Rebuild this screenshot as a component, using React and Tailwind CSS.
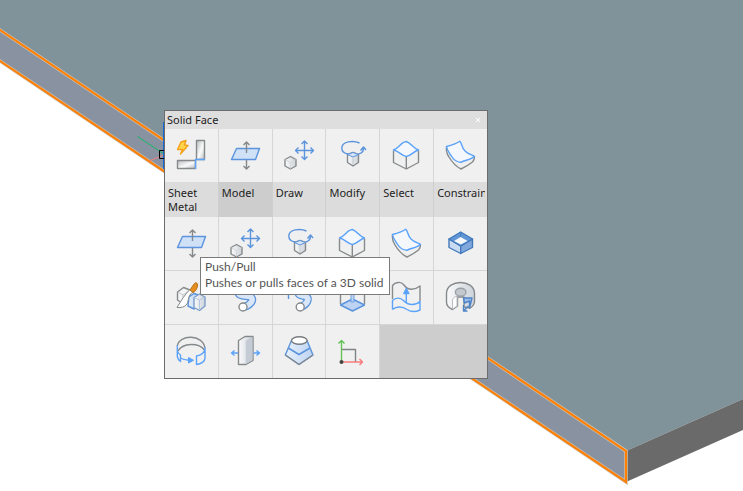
import { useState } from 'react';

const BLUE = '#5b94dd';
const SKY = '#5aa2fa';
const GRAY = '#868a8c';

function Icon({ children }) {
  return (
    <svg viewBox="0 0 32 32" className="h-8 w-8 shrink-0" fill="none" strokeWidth="1.4" strokeLinejoin="round" aria-hidden="true">
      <defs>
        <linearGradient id="steel" x1="0" y1="0" x2="1" y2="1">
          <stop offset="0" stopColor="#b9bcbe" />
          <stop offset="0.55" stopColor="#fbfbfb" />
          <stop offset="1" stopColor="#b9bcbf" />
        </linearGradient>
        <linearGradient id="glass" x1="0" y1="0" x2="1" y2="0">
          <stop offset="0" stopColor="#e8f1fb" />
          <stop offset="1" stopColor="#bdd3f2" />
        </linearGradient>
        <linearGradient id="slab" x1="0" y1="0" x2="1" y2="0">
          <stop offset="0" stopColor="#fafafa" />
          <stop offset="1" stopColor="#cdd3db" />
        </linearGradient>
      </defs>
      {children}
    </svg>
  );
}

function FlangeIcon() {
  return (
    <Icon>
      <rect x="2.5" y="21.5" width="18" height="8" fill="url(#steel)" stroke={GRAY} />
      <rect x="21.5" y="1.5" width="8" height="19" fill="url(#steel)" stroke={GRAY} />
      <path d="M20.5 30V20.5H30" stroke={SKY} />
      <path d="M6 3L11 1.5L9.5 6L13 6.5L5.5 15L7.5 10.5L2.5 10.5Z" fill="#ffd54a" stroke="#f5a01c" />
    </Icon>
  );
}

function PushPullIcon() {
  return (
    <Icon>
      <path d="M7.5 9.5H30.5L26.5 20.5H2.5Z" fill="#cfe1f7" stroke={BLUE} />
      <path d="M17.5 14V3M14.5 6L17.5 3L20.5 6M17.5 21V30M14.5 27L17.5 30L20.5 27" stroke="#85898b" />
    </Icon>
  );
}

function MoveIcon() {
  return (
    <Icon>
      <path d="M2 20.5L7.5 17.5L13 20.5V27L7.5 30L2 27Z" fill="url(#slab)" stroke={GRAY} />
      <path d="M2.5 20.8L7.5 23.5L12.5 20.8M7.5 23.5V29.5" stroke="#d3d7da" strokeWidth="1" />
      <path d="M21.5 2V20.5M12.5 11.5H30.5M18.5 5L21.5 2L24.5 5M18.5 17.5L21.5 20.5L24.5 17.5M15.5 8.5L12.5 11.5L15.5 14.5M27.5 8.5L30.5 11.5L27.5 14.5" stroke={BLUE} />
    </Icon>
  );
}

function RevolveIcon() {
  return (
    <Icon>
      <path d="M11.5 15.5L17 13.5L22.5 15.5V23.5L17 27L11.5 23.5Z" fill="url(#slab)" stroke={GRAY} />
      <path d="M11.5 15.5L17 18L22.5 15.5L17 13.5Z" fill="#d7e5f7" stroke={BLUE} strokeWidth="1" />
      <path d="M17 18V26" stroke="#c3c9cf" strokeWidth="1" />
      <path d="M23.5 4C17 1 6 2.5 5.8 9C5.8 13 9 14.5 12 15M22.5 15C26 14.3 27.5 12.5 27.5 9M24.5 11.5L27.5 8L30 11" stroke={BLUE} />
    </Icon>
  );
}

function CurvedTopIcon() {
  return (
    <Icon>
      <path d="M3.5 11.5V23.5L16.3 30L28.5 23.5V11.5M16.3 18V30" stroke={GRAY} />
      <path d="M3.5 11C9 9 11 3 16.3 2.5C21 4 23 9 28.5 11C24 12 21 17 16.3 17.5C12 17 9 12 3.5 11Z" stroke={SKY} fill="#f4f7fb" />
    </Icon>
  );
}

function CurvedFaceIcon() {
  return (
    <Icon>
      <path d="M2.5 7.5C2 12 2.8 15 5 18C8 23 12 27.5 17 30C21 28 26 25 28.5 23C30 21.5 30.5 19.5 30.5 17.5" stroke={GRAY} />
      <path d="M2.5 7.5C7 6.5 12 5 15.8 2.3C18 4 17.5 9 21 12C24 15 27 15.5 30.5 17.3C27 21 21 21 17 23.3C12 23 9 20 7 16.5C5 13.5 3 11 2.5 7.5Z" fill="#f4f7fb" stroke={SKY} />
    </Icon>
  );
}

function HollowBoxIcon() {
  return (
    <Icon>
      <path d="M5 12L16.7 19V26.5L5 20.5Z" fill="#c9dbf3" stroke="#4279bb" />
      <path d="M28.5 12L16.7 19V26.5L28.5 20.5Z" fill="#81a8dc" stroke="#4279bb" />
      <path d="M5 12L16.7 5L28.5 12L16.7 19Z" fill="#6297d6" stroke="#4279bb" />
      <path d="M10 14L16.7 10L23.5 14L16.7 17.5Z" fill="#f4f8fd" />
      <path d="M16.7 5V10" stroke="#4279bb" strokeWidth="1" />
    </Icon>
  );
}

function SliceIcon() {
  return (
    <Icon>
      <path d="M2.5 11L8.5 6.5L15 9V17L7 22L2.5 19Z" fill="#f4f5f6" stroke={GRAY} />
      <path d="M2.5 11L8 14L15 9M8 14V21" stroke="#c3c6c9" strokeWidth="1" />
      <path d="M14 16L19 12.5L23 14V25L19 28L13 25Z" fill="url(#glass)" stroke={BLUE} />
      <path d="M19 16.5L24.5 13L30 16V25L24.5 29.5L19 26.5Z" fill="url(#slab)" stroke="#7c9fc9" />
      <path d="M19.5 16.8L24.5 19L29.5 16.3M24.5 19V29" stroke="#b4c8e2" strokeWidth="1" />
      <path d="M15.5 8C10 13 6 20 2 26.5C6 27 10 26 12 23C14 18 13 14 18 11Z" fill="#fff" stroke={GRAY} strokeWidth="1" />
      <path d="M15 9L19 3C20.5 1 23 1.5 22.5 5C22 8 20 11 18 11.5Z" fill="#e58e1f" stroke="#b8721b" strokeWidth="1" />
    </Icon>
  );
}

function SweepIcon() {
  return (
    <Icon>
      <path d="M8 9C10 17 16 14 21 15.5C26 18 22 24 15 26" stroke={BLUE} strokeWidth="8" />
      <path d="M8 9C10 17 16 14 21 15.5C26 18 22 24 15 26" stroke="#d9e6f7" strokeWidth="5.5" />
      <circle cx="14" cy="26" r="4" fill="#fff" stroke={GRAY} />
    </Icon>
  );
}

function ExtrudeSweepIcon() {
  return (
    <Icon>
      <path d="M5.5 18V8M3 10L5.5 8L8 10" stroke={BLUE} />
      <path d="M14 9C15 16 19 14 23 15.5C27 18 24 23 18 26" stroke={BLUE} strokeWidth="8" />
      <path d="M14 9C15 16 19 14 23 15.5C27 18 24 23 18 26" stroke="#d9e6f7" strokeWidth="5.5" />
      <circle cx="17.2" cy="26" r="4" fill="#fff" stroke={GRAY} />
    </Icon>
  );
}

function BoxBaseIcon() {
  return (
    <Icon>
      <path d="M4.5 23V8L16.5 2L28.5 8V23" stroke={GRAY} />
      <path d="M4.5 24L16.5 18L28.5 24L16.5 30Z" fill="#bdd3f1" stroke={BLUE} />
      <rect x="15" y="8" width="3" height="13" fill="#bdd3f1" stroke={BLUE} strokeWidth="0.8" />
    </Icon>
  );
}

function WaveIcon() {
  return (
    <Icon>
      <path d="M2.5 18V4.5C5 1 11 0 14 4C18 10 25 9 30 5V20" stroke={GRAY} />
      <path d="M2.5 28.5V19.5C6 16 11 16.5 14 20C18 24.5 26 24.5 30 20.5V29C26 31 21 31 17 28.5C12 25 6 25.5 2.5 28.5" stroke={SKY} />
      <path d="M16.3 22V9" stroke={SKY} />
      <path d="M13.8 12.5L16.3 7.5L18.8 12.5Z" fill={SKY} stroke={SKY} />
    </Icon>
  );
}

function SectionIcon() {
  return (
    <Icon>
      <path d="M2.5 12C3 -2 30 -2 30.5 12V21C30 24 28 26 26 27L20 26V16H13.5V25L8.5 28.5C5 27 2.5 24 2.5 21Z" fill="url(#slab)" stroke={GRAY} />
      <path d="M8.5 19V28L13 25V15.5C10.5 15.5 9 17 8.5 19Z" fill="#fff" stroke="#b9bdc1" strokeWidth="1" />
      <ellipse cx="16.7" cy="11.2" rx="5.3" ry="4" fill="#c3c8ce" stroke="#999fa5" />
      <path d="M19.5 17H28L25.5 27V20L20.5 22Z" fill="#9dbce8" stroke="#4d84c8" />
      <path d="M19.5 24V30H23.5M19.5 30L24.5 25" stroke="#4d84c8" />
    </Icon>
  );
}

function RingIcon() {
  return (
    <Icon>
      <path d="M2.3 11C4 -1 28 -1 30 13M3 16C8 7.5 24 7.5 29.5 15" stroke={GRAY} />
      <path d="M2.3 10.5V21.5C2.8 24 4 25.5 5.5 26.5V20C4 19 2.5 17.5 2.3 15.5M21.5 21V29.5C26 29 30 26.5 30 23V13C30 17.5 26 20.5 21.5 21ZM5.5 23C8 24.5 10 25 14 25.3" stroke={SKY} />
      <path d="M13.5 22.5L18.5 25.3L13.5 28Z" fill={SKY} stroke={SKY} strokeWidth="1" />
    </Icon>
  );
}

function ThickenIcon() {
  return (
    <Icon>
      <path d="M9.5 5.5L16 1.5H24V25.5L17 29.5H9.5Z" fill="url(#slab)" stroke={GRAY} />
      <path d="M16.8 5.5L23.5 2V25.3L16.8 29Z" fill="#c4cbd4" />
      <path d="M9 18H2.5M5.5 15.5L2.5 18L5.5 20.5M24.5 18H30.5M27.5 15.5L30.5 18L27.5 20.5" stroke={SKY} />
    </Icon>
  );
}

function LoftIcon() {
  return (
    <Icon>
      <path d="M8.5 5.5L2.3 20L16 29.5L30 20L24 5.5Z" fill="url(#glass)" stroke={BLUE} />
      <path d="M2.3 20L16 29.5L30 20" stroke={GRAY} />
      <path d="M5.3 13L16 19.5L27 13" stroke={BLUE} strokeWidth="1.5" />
      <ellipse cx="16.3" cy="5.5" rx="7.8" ry="3.8" fill="#fff" stroke="#777c80" />
    </Icon>
  );
}

function UcsIcon() {
  return (
    <Icon>
      <path d="M5.5 14.5H19.5V27" stroke="#808487" />
      <path d="M5.5 27V5.5M2.5 8.5L5.5 5.5L8.5 8.5" stroke="#63c257" />
      <path d="M5.5 27H26.5M23.5 24L26.5 27L23.5 30" stroke="#f77b7b" />
      <circle cx="5.5" cy="27" r="2" fill="#444" />
    </Icon>
  );
}

const favorites = [
  { name: 'Sheet metal flange', icon: FlangeIcon },
  { name: 'Push/Pull', icon: PushPullIcon },
  { name: 'Move', icon: MoveIcon },
  { name: 'Revolve', icon: RevolveIcon },
  { name: 'Curved top', icon: CurvedTopIcon },
  { name: 'Curved face', icon: CurvedFaceIcon },
];

const groups = ['Sheet Metal', 'Model', 'Draw', 'Modify', 'Select', 'Constrain'];

const tools = [
  { name: 'Push/Pull', icon: PushPullIcon },
  { name: 'Move', icon: MoveIcon },
  { name: 'Revolve', icon: RevolveIcon },
  { name: 'Curved top', icon: CurvedTopIcon },
  { name: 'Curved face', icon: CurvedFaceIcon },
  { name: 'Shell', icon: HollowBoxIcon },
  { name: 'Slice', icon: SliceIcon },
  { name: 'Sweep', icon: SweepIcon },
  { name: 'Extrude along path', icon: ExtrudeSweepIcon },
  { name: 'Base face', icon: BoxBaseIcon },
  { name: 'Wave surface', icon: WaveIcon },
  { name: 'Section', icon: SectionIcon },
  { name: 'Ring', icon: RingIcon },
  { name: 'Thicken', icon: ThickenIcon },
  { name: 'Loft', icon: LoftIcon },
  { name: 'UCS', icon: UcsIcon },
];

function ToolButton({ tool }) {
  const Glyph = tool.icon;
  return (
    <button aria-label={tool.name} className="flex h-[53px] items-center justify-center bg-[#f0f0f0] pr-px pb-px hover:bg-white">
      <Glyph />
    </button>
  );
}

function Scene() {
  return (
    <svg viewBox="0 0 743 491" preserveAspectRatio="xMinYMin slice" className="absolute inset-0 h-full w-full" aria-hidden="true">
      <path d="M0 0H743V399L626 451L0 31Z" fill="#80929a" />
      <path d="M626 451L743 399V430L626 482Z" fill="#6a6a6a" />
      <path d="M0 30L626 451V482L0 61Z" fill="#8892a1" />
      <g fill="none">
        <path d="M-4 27.3L626 451V482L-4 58.3" stroke="#c9c4bd" strokeWidth="3.5" />
        <path d="M-4 27.3L626 451V482L-4 58.3" stroke="#ff8000" strokeWidth="2.2" />
        <path d="M137.5 136.5L164 154" stroke="#15b866" />
        <path d="M149 161L164 155" stroke="#f08080" />
        <path d="M163.5 122V169" stroke="#1569d6" />
        <path d="M166 150.5H159.5V158.5H166" stroke="#000" />
      </g>
    </svg>
  );
}

export default function App() {
  const [active, setActive] = useState('Model');

  return (
    <main className="relative min-h-screen overflow-hidden bg-white">
      <Scene />

      <section className="absolute left-[164px] top-[110px] w-[324px] border border-[#6c6c6c] bg-[#dedede] font-['Noto_Sans',sans-serif] text-[11px] leading-[14px] text-[#1c1c1c]">
        <header className="flex h-[18px] items-center justify-between pl-0.5 pr-1">
          <h1>Solid Face</h1>
          <button aria-label="Close" className="p-0.5">
            <svg viewBox="0 0 6 6" className="h-1.5 w-1.5" stroke="#fff" aria-hidden="true">
              <path d="M1 1L5 5M5 1L1 5" />
            </svg>
          </button>
        </header>

        <div className="grid grid-cols-6 gap-px bg-[#d6d6d6]">
          {favorites.map((tool) => (
            <ToolButton key={tool.name} tool={tool} />
          ))}
        </div>

        <div className="grid grid-cols-6 gap-px bg-[#cfcfcf]">
          {groups.map((group) => (
            <button
              key={group}
              onClick={() => setActive(group)}
              className={`h-[35px] pl-[3px] pr-0.5 py-1 text-left ${
                active === group ? 'bg-[#cdcdcd]' : 'bg-[#dcdcdc]'
              }`}
            >
              <span className="block h-full overflow-hidden">{group}</span>
            </button>
          ))}
        </div>

        <div className="grid grid-cols-6 gap-px bg-[#d6d6d6]">
          {tools.map((tool, i) => (
            <ToolButton key={i} tool={tool} />
          ))}
          <div className="col-span-2 bg-[#cdcdcd]" />
        </div>

        <div role="tooltip" className="absolute left-[35px] top-[146px] min-w-[190px] whitespace-nowrap border border-[#7b7b7b] bg-white px-1 py-px pb-[3px] font-['Lato',sans-serif] text-[12px] leading-[16px] text-[#555]">
          <p>Push/Pull</p>
          <p>Pushes or pulls faces of a 3D solid</p>
        </div>
      </section>
    </main>
  );
}
